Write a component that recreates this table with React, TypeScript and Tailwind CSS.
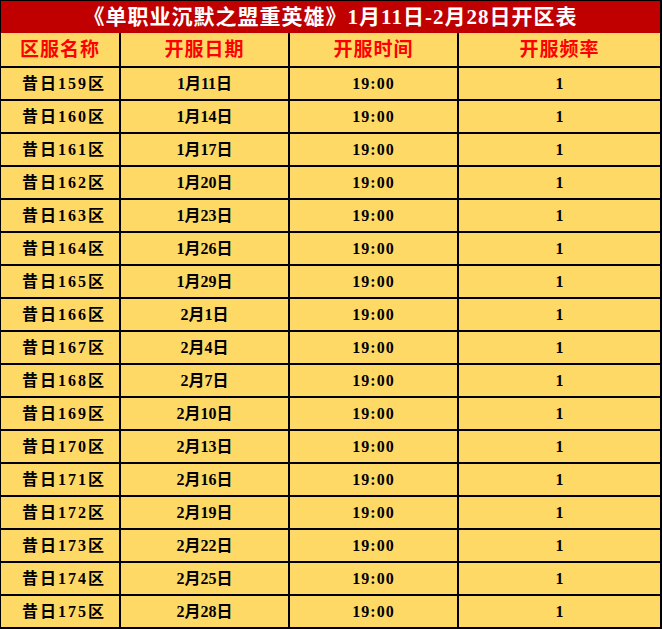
const rows = [
  ['159', '1月11日'],
  ['160', '1月14日'],
  ['161', '1月17日'],
  ['162', '1月20日'],
  ['163', '1月23日'],
  ['164', '1月26日'],
  ['165', '1月29日'],
  ['166', '2月1日'],
  ['167', '2月4日'],
  ['168', '2月7日'],
  ['169', '2月10日'],
  ['170', '2月13日'],
  ['171', '2月16日'],
  ['172', '2月19日'],
  ['173', '2月22日'],
  ['174', '2月25日'],
  ['175', '2月28日'],
];

const headers = ['区服名称', '开服日期', '开服时间', '开服频率'];

const font = { fontFamily: '"Liberation Serif", "Noto Sans CJK SC", serif' };

export default function App() {
  return (
    <div className="w-[662px] h-[629px] bg-black pl-[1px] pt-[1px] pr-[2px] pb-[2px]" style={font}>
      {/* title bar */}
      <div className="h-[32px] bg-[#c00000] flex items-center justify-center text-white font-bold text-[21px] leading-none tracking-[1px]">
        《单职业沉默之盟重英雄》1月11日-2月28日开区表
      </div>

      <div className="grid grid-cols-[118px_167px_167px_201px] grid-rows-[33px_repeat(17,31px)] gap-[2px]">
        {headers.map(h => (
          <div
            key={h}
            className="bg-[#ffd966] flex items-center justify-center text-[#ff0000] font-bold text-[19px] leading-none tracking-[1px]"
          >
            {h}
          </div>
        ))}
        {rows.map(([id, date]) => (
          <div key={id} className="contents">
            <div className="bg-[#ffd966] flex items-center justify-center font-bold text-[16px] text-black leading-none pl-[8px] tracking-[2px]">
              昔日{id}区
            </div>
            <div className="bg-[#ffd966] flex items-center justify-center font-bold text-[16px] text-black leading-none">
              {date}
            </div>
            <div className="bg-[#ffd966] flex items-center justify-center font-bold text-[16px] text-black leading-none tracking-[1px]">
              19:00
            </div>
            <div className="bg-[#ffd966] flex items-center justify-center font-bold text-[16px] text-black leading-none">
              1
            </div>
          </div>
        ))}
      </div>
    </div>
  );
}
